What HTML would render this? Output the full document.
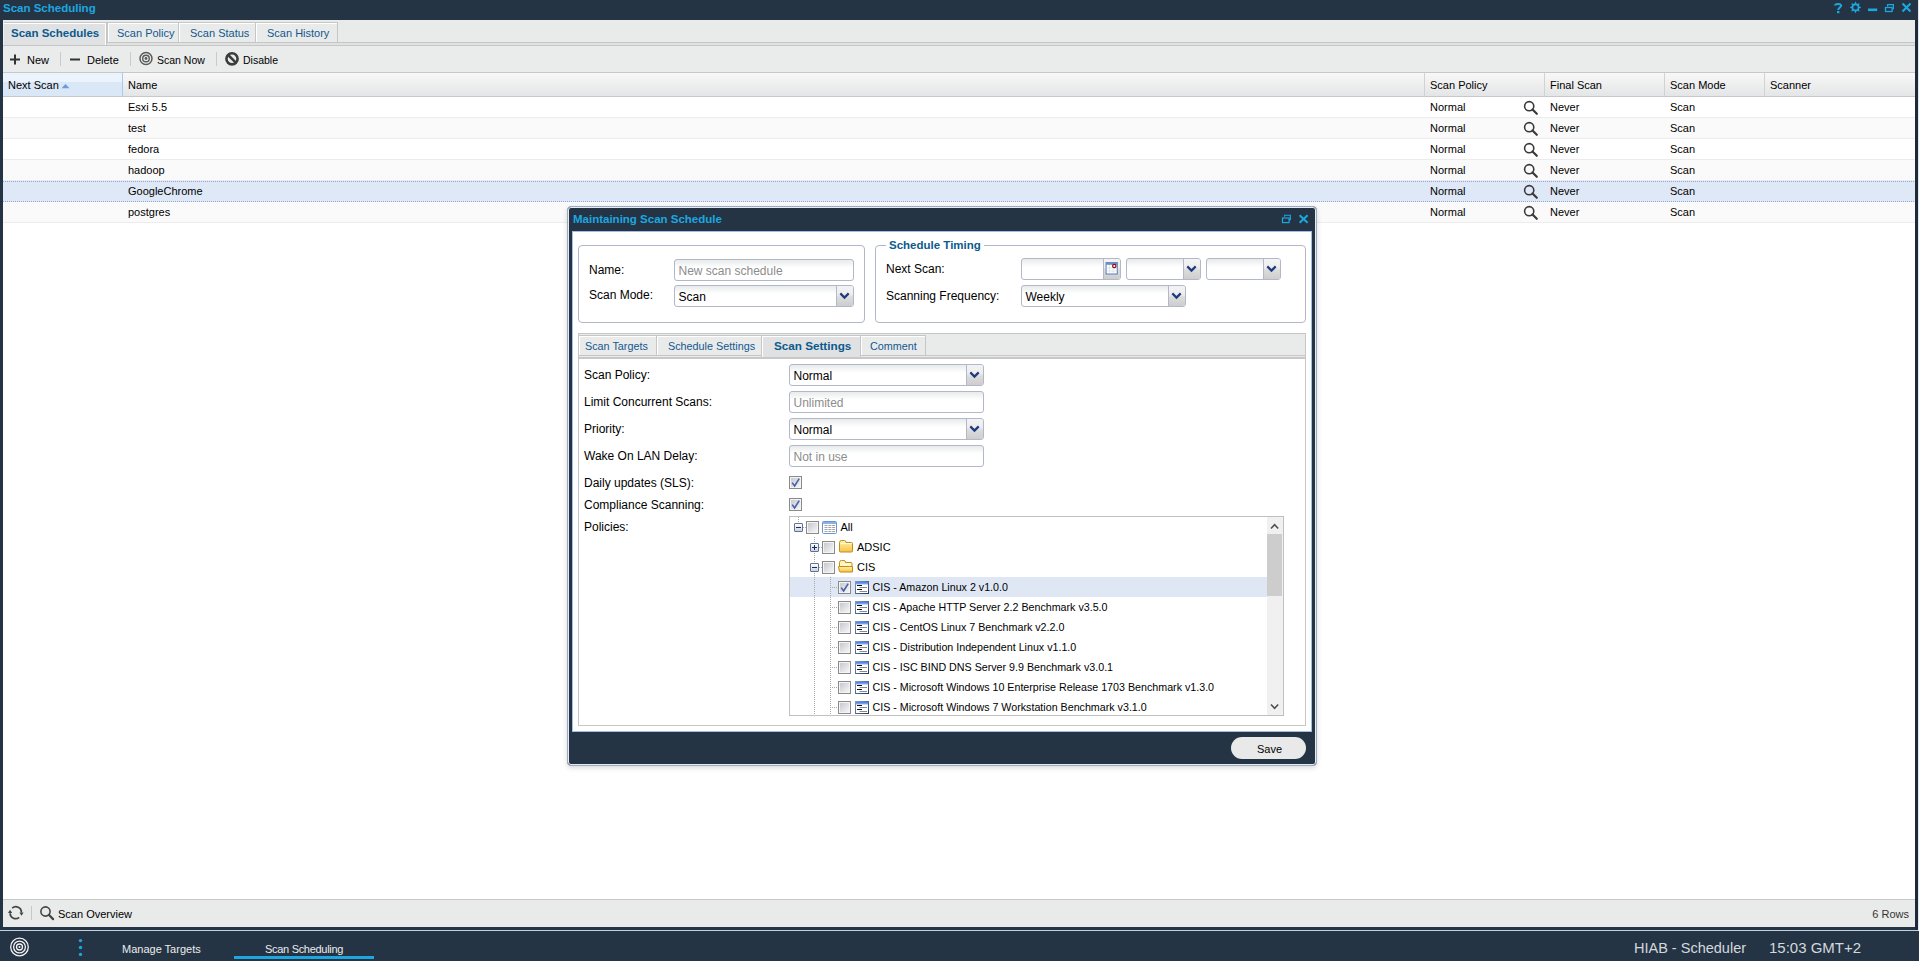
<!DOCTYPE html>
<html><head><meta charset="utf-8">
<style>
*{box-sizing:border-box}
html,body{margin:0;padding:0}
body{width:1919px;height:961px;overflow:hidden;background:#243444;position:relative;font-family:"Liberation Sans",sans-serif;font-size:11px;color:#000}
.a{position:absolute}
.t{position:absolute;white-space:pre;line-height:1}
svg{position:absolute;overflow:visible}
.tab{position:absolute;top:22px;height:21px;border:1px solid #c6c6c6;background:#e9ebea;box-shadow:inset 1px 1px 0 #fff}
.tt{color:#15609a}
</style></head><body>
<div class="t" style="left:3px;top:3px;font-size:11.5px;font-weight:bold;color:#1ca7e0">Scan Scheduling</div>
<svg style="left:0;top:0" width="1919" height="20">
<g fill="none" stroke="#1ca7e0">
<path d="M1835 5.6 C1835 3.6 1841.2 3.2 1841.2 5.6 C1841.2 7.2 1838.2 8 1838.2 10" stroke-width="2"/>
<rect x="1837" y="11" width="2.4" height="2.2" fill="#1ca7e0" stroke="none"/>
<path d="M1855.50 1.60 L1854.08 3.98 L1851.40 3.30 L1852.08 5.98 L1849.70 7.40 L1852.08 8.82 L1851.40 11.50 L1854.08 10.82 L1855.50 13.20 L1856.92 10.82 L1859.60 11.50 L1858.92 8.82 L1861.30 7.40 L1858.92 5.98 L1859.60 3.30 L1856.92 3.98 Z M1857.7 7.4 A2.2 2.2 0 1 0 1853.3 7.4 A2.2 2.2 0 1 0 1857.7 7.4 Z" fill="#1ca7e0" fill-rule="evenodd" stroke="none"/>
<rect x="1868" y="8.5" width="9.2" height="2.6" fill="#1ca7e0" stroke="none"/>
<path d="M1887.6 6.6 V4.6 H1893.4 V8.6 H1892.4" stroke-width="1.2"/>
<rect x="1885.5" y="7.5" width="6.6" height="4" stroke-width="1.3"/>
<path d="M1902.5 3.6 L1910.5 11.4 M1910.5 3.6 L1902.5 11.4" stroke-width="2.1"/>
</g></svg>
<div class="a" style="left:3px;top:20px;width:1912px;height:907px;background:#fff"></div>
<div class="a" style="left:3px;top:20px;width:1912px;height:26px;background:#e9ebea"></div>
<div class="a" style="left:3px;top:42px;width:1912px;height:1px;background:#c6c6c6"></div>
<div class="a" style="left:3px;top:43px;width:1912px;height:2px;background:#e0e1e3"></div>
<div class="a" style="left:3px;top:45px;width:1912px;height:1px;background:#c6c6c6"></div>
<div class="a" style="left:3px;top:22px;width:104px;height:23px;background:#e0e1e3;border-top:1px solid #c6c6c6;border-right:1px solid #c6c6c6;box-shadow:inset -1px 1px 0 #fff"></div>
<div class="a" style="left:3px;top:22px;width:1px;height:23px;background:#eef0f0"></div>
<div class="t" style="left:11px;top:28px;font-weight:bold;font-size:11.5px;color:#0b5a8c">Scan Schedules</div>
<div class="tab" style="left:107px;width:72px"></div>
<div class="t" style="left:117px;top:28px;color:#12588f">Scan Policy</div>
<div class="tab" style="left:178px;width:78px"></div>
<div class="t" style="left:190px;top:28px;color:#12588f">Scan Status</div>
<div class="tab" style="left:255px;width:83px"></div>
<div class="t" style="left:267px;top:28px;color:#12588f">Scan History</div>
<div class="a" style="left:3px;top:46px;width:1912px;height:26px;background:#eaeceb"></div>
<div class="a" style="left:3px;top:72px;width:1912px;height:1px;background:#c8c8c8"></div>
<div class="a" style="left:60px;top:52px;width:1px;height:14px;background:#c9cbcb"></div>
<div class="a" style="left:130px;top:52px;width:1px;height:14px;background:#c9cbcb"></div>
<div class="a" style="left:216px;top:52px;width:1px;height:14px;background:#c9cbcb"></div>
<svg style="left:0;top:0" width="300" height="80">
<path d="M15 54.5 V64.5 M10 59.5 H20" stroke="#333" stroke-width="2"/>
<path d="M70 59.5 H80" stroke="#333" stroke-width="2"/>
<g fill="none" stroke="#5a5a5a"><circle cx="146" cy="58.5" r="6" stroke-width="1.5"/><circle cx="146" cy="58.5" r="3.3" stroke-width="1.4"/></g>
<circle cx="146" cy="58.5" r="1.4" fill="#5a5a5a"/>
<g fill="none" stroke="#3c3c3c"><circle cx="232" cy="58.8" r="5.6" stroke-width="2.6"/><path d="M228.2 55 L235.8 62.6" stroke-width="2.5"/></g>
</svg>
<div class="t" style="left:27px;top:55px;font-size:11px">New</div>
<div class="t" style="left:87px;top:55px;font-size:11px">Delete</div>
<div class="t" style="left:157px;top:55px;font-size:10.5px">Scan Now</div>
<div class="t" style="left:243px;top:55px;font-size:10.5px">Disable</div>
<div class="a" style="left:3px;top:73px;width:1912px;height:23px;background:linear-gradient(#f8f8f8,#e4e5e6)"></div>
<div class="a" style="left:3px;top:96px;width:1912px;height:1px;background:#c8c8c8"></div>
<div class="a" style="left:3px;top:73px;width:119px;height:9px;background:#ebf3fc"></div>
<div class="a" style="left:3px;top:82px;width:119px;height:14px;background:#dae7f7"></div>
<div class="a" style="left:122px;top:73px;width:1px;height:23px;background:#a9c9ef"></div>
<div class="a" style="left:1424px;top:73px;width:1px;height:23px;background:#d2d2d2"></div>
<div class="a" style="left:1544px;top:73px;width:1px;height:23px;background:#d2d2d2"></div>
<div class="a" style="left:1664px;top:73px;width:1px;height:23px;background:#d2d2d2"></div>
<div class="a" style="left:1764px;top:73px;width:1px;height:23px;background:#d2d2d2"></div>
<div class="t" style="left:8px;top:79.69px;font-size:11px;">Next Scan</div>
<svg style="left:0;top:0" width="80" height="100"><path d="M61.5 88.2 L65.5 84 L69.5 88.2 Z" fill="#6e9bd6"/></svg>
<div class="t" style="left:128px;top:79.69px;font-size:11px;">Name</div>
<div class="t" style="left:1430px;top:79.69px;font-size:11px;">Scan Policy</div>
<div class="t" style="left:1550px;top:79.69px;font-size:11px;">Final Scan</div>
<div class="t" style="left:1670px;top:79.69px;font-size:11px;">Scan Mode</div>
<div class="t" style="left:1770px;top:79.69px;font-size:11px;">Scanner</div>
<div class="a" style="left:3px;top:97px;width:1912px;height:20px;background:#ffffff"></div>
<div class="a" style="left:3px;top:117px;width:1912px;height:1px;background:#ececec"></div>
<div class="t" style="left:128px;top:101.69px;font-size:11px;">Esxi 5.5</div>
<div class="t" style="left:1430px;top:101.69px;font-size:11px;">Normal</div>
<div class="t" style="left:1550px;top:101.69px;font-size:11px;">Never</div>
<div class="t" style="left:1670px;top:101.69px;font-size:11px;">Scan</div>
<div class="a" style="left:3px;top:118px;width:1912px;height:20px;background:#fafafa"></div>
<div class="a" style="left:3px;top:138px;width:1912px;height:1px;background:#ececec"></div>
<div class="t" style="left:128px;top:122.69px;font-size:11px;">test</div>
<div class="t" style="left:1430px;top:122.69px;font-size:11px;">Normal</div>
<div class="t" style="left:1550px;top:122.69px;font-size:11px;">Never</div>
<div class="t" style="left:1670px;top:122.69px;font-size:11px;">Scan</div>
<div class="a" style="left:3px;top:139px;width:1912px;height:20px;background:#ffffff"></div>
<div class="a" style="left:3px;top:159px;width:1912px;height:1px;background:#ececec"></div>
<div class="t" style="left:128px;top:143.69px;font-size:11px;">fedora</div>
<div class="t" style="left:1430px;top:143.69px;font-size:11px;">Normal</div>
<div class="t" style="left:1550px;top:143.69px;font-size:11px;">Never</div>
<div class="t" style="left:1670px;top:143.69px;font-size:11px;">Scan</div>
<div class="a" style="left:3px;top:160px;width:1912px;height:20px;background:#fafafa"></div>
<div class="a" style="left:3px;top:180px;width:1912px;height:1px;background:#ececec"></div>
<div class="t" style="left:128px;top:164.69px;font-size:11px;">hadoop</div>
<div class="t" style="left:1430px;top:164.69px;font-size:11px;">Normal</div>
<div class="t" style="left:1550px;top:164.69px;font-size:11px;">Never</div>
<div class="t" style="left:1670px;top:164.69px;font-size:11px;">Scan</div>
<div class="a" style="left:3px;top:181px;width:1912px;height:20px;background:#dfe8f6"></div>
<div class="a" style="left:3px;top:201px;width:1912px;height:1px;background:#ececec"></div>
<div class="t" style="left:128px;top:185.69px;font-size:11px;">GoogleChrome</div>
<div class="t" style="left:1430px;top:185.69px;font-size:11px;">Normal</div>
<div class="t" style="left:1550px;top:185.69px;font-size:11px;">Never</div>
<div class="t" style="left:1670px;top:185.69px;font-size:11px;">Scan</div>
<div class="a" style="left:3px;top:202px;width:1912px;height:20px;background:#fafafa"></div>
<div class="a" style="left:3px;top:222px;width:1912px;height:1px;background:#ececec"></div>
<div class="t" style="left:128px;top:206.69px;font-size:11px;">postgres</div>
<div class="t" style="left:1430px;top:206.69px;font-size:11px;">Normal</div>
<div class="t" style="left:1550px;top:206.69px;font-size:11px;">Never</div>
<div class="t" style="left:1670px;top:206.69px;font-size:11px;">Scan</div>
<svg style="left:0;top:0" width="1919" height="240"><circle cx="1529.2" cy="106.2" r="4.6" fill="none" stroke="#3a3a3a" stroke-width="1.6"/><path d="M1532.5 109.5 L1536.8 113.8" stroke="#3a3a3a" stroke-width="2.2" stroke-linecap="round"/><circle cx="1529.2" cy="127.2" r="4.6" fill="none" stroke="#3a3a3a" stroke-width="1.6"/><path d="M1532.5 130.5 L1536.8 134.8" stroke="#3a3a3a" stroke-width="2.2" stroke-linecap="round"/><circle cx="1529.2" cy="148.2" r="4.6" fill="none" stroke="#3a3a3a" stroke-width="1.6"/><path d="M1532.5 151.5 L1536.8 155.79999999999998" stroke="#3a3a3a" stroke-width="2.2" stroke-linecap="round"/><circle cx="1529.2" cy="169.2" r="4.6" fill="none" stroke="#3a3a3a" stroke-width="1.6"/><path d="M1532.5 172.5 L1536.8 176.79999999999998" stroke="#3a3a3a" stroke-width="2.2" stroke-linecap="round"/><circle cx="1529.2" cy="190.2" r="4.6" fill="none" stroke="#3a3a3a" stroke-width="1.6"/><path d="M1532.5 193.5 L1536.8 197.79999999999998" stroke="#3a3a3a" stroke-width="2.2" stroke-linecap="round"/><circle cx="1529.2" cy="211.2" r="4.6" fill="none" stroke="#3a3a3a" stroke-width="1.6"/><path d="M1532.5 214.5 L1536.8 218.79999999999998" stroke="#3a3a3a" stroke-width="2.2" stroke-linecap="round"/></svg>
<div class="a" style="left:3px;top:181px;width:1912px;height:1px;background:repeating-linear-gradient(90deg,#8aa6dc 0 1px,transparent 1px 2px)"></div>
<div class="a" style="left:3px;top:201px;width:1912px;height:1px;background:repeating-linear-gradient(90deg,#8aa6dc 0 1px,transparent 1px 2px)"></div>
<div class="a" style="left:3px;top:899px;width:1912px;height:1px;background:#c8c8c8"></div>
<div class="a" style="left:3px;top:900px;width:1912px;height:27px;background:#e9ebea"></div>
<div class="a" style="left:31px;top:906px;width:1px;height:14px;background:#c6c8c8"></div>
<svg style="left:0;top:0" width="80" height="930">
<g fill="none" stroke="#444" stroke-width="1.7">
<path d="M12.2 908.2 A5.5 5.5 0 0 1 21.4 912.4"/>
<path d="M19.2 917.3 A5.5 5.5 0 0 1 10.1 913.2"/>
</g>
<path d="M19.4 912.6 L23.6 912.6 L21.5 915.8 Z" fill="#444"/>
<path d="M8 913 L12.2 913 L10.1 909.8 Z" fill="#444"/>
<circle cx="45.5" cy="911.5" r="4.6" fill="none" stroke="#444" stroke-width="1.6"/><path d="M48.8 914.8 L53.1 919.1" stroke="#444" stroke-width="2.2" stroke-linecap="round"/>
</svg>
<div class="t" style="left:58px;top:908.69px;font-size:11px;">Scan Overview</div>
<div class="t" style="right:10px;top:908.7px;font-size:11px;color:#333">6 Rows</div>
<div class="a" style="left:0px;top:927px;width:1919px;height:34px;background:#243444"></div>
<div class="a" style="left:0px;top:930px;width:1919px;height:1px;background:#c4d0e0"></div>
<div class="a" style="left:1918px;top:0px;width:1px;height:931px;background:#dfe7f3"></div>
<div class="a" style="left:1915px;top:20px;width:3px;height:910px;background:#1c2a39"></div>
<svg style="left:0;top:0" width="100" height="961">
<g fill="none" stroke="#f2f2f2" stroke-width="1.3"><circle cx="19.5" cy="947" r="8.8"/><circle cx="19.5" cy="947" r="5.9"/><circle cx="19.5" cy="947" r="3"/></g>
<circle cx="19.5" cy="947" r="1" fill="#f2f2f2"/>
<g fill="#1ca7e0"><circle cx="80.5" cy="940.6" r="1.7"/><circle cx="80.5" cy="947.5" r="1.7"/><circle cx="80.5" cy="954.4" r="1.7"/></g>
</svg>
<div class="t" style="left:122px;top:943.69px;font-size:11px;color:#ececec">Manage Targets</div>
<div class="t" style="left:265px;top:943.69px;font-size:11px;color:#ececec;letter-spacing:-0.3px">Scan Scheduling</div>
<div class="a" style="left:234px;top:956px;width:140px;height:3px;background:#1ca7e0"></div>
<div class="t" style="left:1634px;top:940.73px;font-size:14.5px;color:#d4d8dc">HIAB - Scheduler</div>
<div class="t" style="left:1769px;top:940.30px;font-size:15px;color:#d4d8dc">15:03 GMT+2</div>
<div class="a" style="left:567px;top:206px;width:750px;height:560px;border:1px solid #9eabbf;border-radius:4px;background:#243444;box-shadow:0 2px 5px rgba(0,0,0,0.15),inset 0 0 0 1px #e4ecf8"></div>
<div class="t" style="left:573px;top:213.97px;font-size:11.5px;font-weight:bold;color:#1ca7e0">Maintaining Scan Schedule</div>
<svg style="left:0;top:0" width="1" height="1"><g fill="none" stroke="#1ca7e0">
<path d="M1284.6 216.8 V215.3 H1290.4 V219.6 H1289" stroke-width="1.1"/>
<rect x="1282.5" y="218" width="6.6" height="4.6" stroke-width="1.2"/>
<path d="M1299.6 215.2 L1307.6 222.8 M1307.6 215.2 L1299.6 222.8" stroke-width="2"/></g></svg>
<div class="a" style="left:572px;top:231px;width:740px;height:501px;background:#fff;border:1px solid #9dbfe9"></div>
<div class="a" style="left:578px;top:245px;width:287px;height:78px;border:1px solid #b2b6ca;border-radius:4px"></div>
<div class="t" style="left:589px;top:263.84px;font-size:12px;">Name:</div>
<div class="a" style="left:674px;top:259px;width:180px;height:22px;border:1px solid #b3b7cb;border-radius:3px;background:linear-gradient(#e8ebeb,#fff 8px);overflow:hidden"></div>
<div class="t" style="left:678.5px;top:264.59px;font-size:12px;color:#8c8c8c">New scan schedule</div>
<div class="t" style="left:589px;top:288.84px;font-size:12px;">Scan Mode:</div>
<div class="a" style="left:674px;top:285px;width:180px;height:22px;border:1px solid #b3b7cb;border-radius:3px;background:linear-gradient(#e8ebeb,#fff 8px);overflow:hidden"><div class="a" style="right:0;top:0;width:17px;height:20px;border-left:1px solid #b3b7cb;background:linear-gradient(#f3f3f3,#ededed 42%,#dcdcdc 55%,#cdcdcd)"></div></div>
<svg style="left:0;top:0" width="1" height="1"><path d="M840.3 293.4 L844.5 297.6 L848.7 293.4" fill="none" stroke="#1f3a7e" stroke-width="2.2"/></svg>
<div class="t" style="left:678.5px;top:290.59px;font-size:12px;color:#000">Scan</div>
<div class="a" style="left:875px;top:245px;width:431px;height:78px;border:1px solid #b2b6ca;border-radius:4px"></div>
<div class="a" style="left:886px;top:243px;width:98px;height:4px;background:#fff"></div>
<div class="t" style="left:889px;top:239.87px;font-size:11.5px;font-weight:bold;color:#0e5a8c">Schedule Timing</div>
<div class="t" style="left:886px;top:263.04px;font-size:12px;">Next Scan:</div>
<div class="a" style="left:1021px;top:258px;width:100px;height:22px;border:1px solid #b3b7cb;border-radius:3px;background:linear-gradient(#e8ebeb,#fff 8px);overflow:hidden"><div class="a" style="right:0;top:0;width:17px;height:20px;border-left:1px solid #b3b7cb;background:linear-gradient(#f3f3f3,#ededed 42%,#dcdcdc 55%,#cdcdcd)"></div></div>
<svg style="left:0;top:0" width="1" height="1"><rect x="1106.1" y="262.6" width="11.2" height="11.4" fill="#fff" stroke="#6b8cc4" stroke-width="1.2"/><rect x="1106.1" y="262.6" width="11.2" height="2.2" fill="#6b8cc4"/>
<path d="M1109.5 265.0 V273.5 M1113.1 265.0 V273.5 M1106.5 268.0 H1117.0 M1106.5 271.0 H1117.0" stroke="#d8dde6" stroke-width="0.8"/>
<circle cx="1114.3" cy="266.0" r="1.7" fill="#fff" stroke="#8b0f0f" stroke-width="1.2"/></svg>
<div class="a" style="left:1126px;top:258px;width:75px;height:22px;border:1px solid #b3b7cb;border-radius:3px;background:linear-gradient(#e8ebeb,#fff 8px);overflow:hidden"><div class="a" style="right:0;top:0;width:17px;height:20px;border-left:1px solid #b3b7cb;background:linear-gradient(#f3f3f3,#ededed 42%,#dcdcdc 55%,#cdcdcd)"></div></div>
<svg style="left:0;top:0" width="1" height="1"><path d="M1187.3 266.4 L1191.5 270.6 L1195.7 266.4" fill="none" stroke="#1f3a7e" stroke-width="2.2"/></svg>
<div class="a" style="left:1206px;top:258px;width:75px;height:22px;border:1px solid #b3b7cb;border-radius:3px;background:linear-gradient(#e8ebeb,#fff 8px);overflow:hidden"><div class="a" style="right:0;top:0;width:17px;height:20px;border-left:1px solid #b3b7cb;background:linear-gradient(#f3f3f3,#ededed 42%,#dcdcdc 55%,#cdcdcd)"></div></div>
<svg style="left:0;top:0" width="1" height="1"><path d="M1267.3 266.4 L1271.5 270.6 L1275.7 266.4" fill="none" stroke="#1f3a7e" stroke-width="2.2"/></svg>
<div class="t" style="left:886px;top:289.84px;font-size:12px;">Scanning Frequency:</div>
<div class="a" style="left:1021px;top:285px;width:165px;height:22px;border:1px solid #b3b7cb;border-radius:3px;background:linear-gradient(#e8ebeb,#fff 8px);overflow:hidden"><div class="a" style="right:0;top:0;width:17px;height:20px;border-left:1px solid #b3b7cb;background:linear-gradient(#f3f3f3,#ededed 42%,#dcdcdc 55%,#cdcdcd)"></div></div>
<svg style="left:0;top:0" width="1" height="1"><path d="M1172.3 293.4 L1176.5 297.6 L1180.7 293.4" fill="none" stroke="#1f3a7e" stroke-width="2.2"/></svg>
<div class="t" style="left:1025.5px;top:290.59px;font-size:12px;color:#000">Weekly</div>
<div class="a" style="left:578px;top:333px;width:728px;height:393px;border:1px solid #c6c6c6;background:#fff"></div>
<div class="a" style="left:579px;top:334px;width:726px;height:24px;background:#e9ebea"></div>
<div class="a" style="left:579px;top:355px;width:726px;height:1px;background:#c8c8c8"></div>
<div class="a" style="left:579px;top:357px;width:726px;height:2px;background:#c8c8c8"></div>
<div class="a" style="left:578px;top:335px;width:79px;height:21px;border:1px solid #c6c6c6;background:#e9ebea;box-shadow:inset 1px 1px 0 #fff"></div>
<div class="t" style="left:585px;top:340.86px;font-size:10.8px;color:#12588f">Scan Targets</div>
<div class="a" style="left:656px;top:335px;width:106px;height:21px;border:1px solid #c6c6c6;background:#e9ebea;box-shadow:inset 1px 1px 0 #fff"></div>
<div class="t" style="left:668px;top:340.86px;font-size:10.8px;color:#12588f">Schedule Settings</div>
<div class="a" style="left:860px;top:335px;width:66px;height:21px;border:1px solid #c6c6c6;background:#e9ebea;box-shadow:inset 1px 1px 0 #fff"></div>
<div class="t" style="left:870px;top:340.86px;font-size:10.8px;color:#12588f">Comment</div>
<div class="a" style="left:761px;top:335px;width:100px;height:22px;border:1px solid #c6c6c6;border-bottom:none;background:#e0e1e3;box-shadow:inset 1px 1px 0 #fff"></div>
<div class="t" style="left:774px;top:340.10px;font-size:11.7px;font-weight:bold;color:#0b5a8c">Scan Settings</div>
<div class="t" style="left:584px;top:368.84px;font-size:12px;">Scan Policy:</div>
<div class="a" style="left:789px;top:364px;width:195px;height:22px;border:1px solid #b3b7cb;border-radius:3px;background:linear-gradient(#e8ebeb,#fff 8px);overflow:hidden"><div class="a" style="right:0;top:0;width:17px;height:20px;border-left:1px solid #b3b7cb;background:linear-gradient(#f3f3f3,#ededed 42%,#dcdcdc 55%,#cdcdcd)"></div></div>
<svg style="left:0;top:0" width="1" height="1"><path d="M970.3 372.4 L974.5 376.6 L978.7 372.4" fill="none" stroke="#1f3a7e" stroke-width="2.2"/></svg>
<div class="t" style="left:793.5px;top:369.59px;font-size:12px;color:#000">Normal</div>
<div class="t" style="left:584px;top:395.84px;font-size:12px;">Limit Concurrent Scans:</div>
<div class="a" style="left:789px;top:391px;width:195px;height:22px;border:1px solid #b3b7cb;border-radius:3px;background:linear-gradient(#e8ebeb,#fff 8px);overflow:hidden"></div>
<div class="t" style="left:793.5px;top:396.59px;font-size:12px;color:#8c8c8c">Unlimited</div>
<div class="t" style="left:584px;top:422.84px;font-size:12px;">Priority:</div>
<div class="a" style="left:789px;top:418px;width:195px;height:22px;border:1px solid #b3b7cb;border-radius:3px;background:linear-gradient(#e8ebeb,#fff 8px);overflow:hidden"><div class="a" style="right:0;top:0;width:17px;height:20px;border-left:1px solid #b3b7cb;background:linear-gradient(#f3f3f3,#ededed 42%,#dcdcdc 55%,#cdcdcd)"></div></div>
<svg style="left:0;top:0" width="1" height="1"><path d="M970.3 426.4 L974.5 430.6 L978.7 426.4" fill="none" stroke="#1f3a7e" stroke-width="2.2"/></svg>
<div class="t" style="left:793.5px;top:423.59px;font-size:12px;color:#000">Normal</div>
<div class="t" style="left:584px;top:449.84px;font-size:12px;">Wake On LAN Delay:</div>
<div class="a" style="left:789px;top:445px;width:195px;height:22px;border:1px solid #b3b7cb;border-radius:3px;background:linear-gradient(#e8ebeb,#fff 8px);overflow:hidden"></div>
<div class="t" style="left:793.5px;top:450.59px;font-size:12px;color:#8c8c8c">Not in use</div>
<div class="t" style="left:584px;top:476.84px;font-size:12px;">Daily updates (SLS):</div>
<div class="a" style="left:789px;top:476px;width:13px;height:13px;border:1px solid #8a8a8a;background:#fff;box-shadow:inset 0 0 0 1px #f4f4f4"></div><div class="a" style="left:791px;top:478px;width:9px;height:9px;background:linear-gradient(135deg,#c6c9cf,#f5f5f5)"></div>
<svg style="left:0;top:0" width="1" height="1"><path d="M792.2 482.6 L794.6 486 L799.2 478.6" fill="none" stroke="#4862aa" stroke-width="1.6"/></svg>
<div class="t" style="left:584px;top:498.84px;font-size:12px;">Compliance Scanning:</div>
<div class="a" style="left:789px;top:498px;width:13px;height:13px;border:1px solid #8a8a8a;background:#fff;box-shadow:inset 0 0 0 1px #f4f4f4"></div><div class="a" style="left:791px;top:500px;width:9px;height:9px;background:linear-gradient(135deg,#c6c9cf,#f5f5f5)"></div>
<svg style="left:0;top:0" width="1" height="1"><path d="M792.2 504.6 L794.6 508 L799.2 500.6" fill="none" stroke="#4862aa" stroke-width="1.6"/></svg>
<div class="t" style="left:584px;top:520.84px;font-size:12px;">Policies:</div>
<div class="a" style="left:789px;top:516px;width:495px;height:200px;border:1px solid #c0c0c0;background:#fff;overflow:hidden"></div>
<div class="a" style="left:790px;top:577px;width:477px;height:20px;background:#dfe7f5"></div>
<div class="a" style="left:1267px;top:517px;width:16px;height:198px;background:#f0f0f0"></div>
<div class="a" style="left:1267px;top:534px;width:15px;height:62px;background:#cdcdcd"></div>
<svg style="left:0;top:0" width="1" height="1"><path d="M1271 528.5 L1274.6 524.6 L1278.2 528.5" fill="none" stroke="#505050" stroke-width="1.6"/><path d="M1271 704.5 L1274.6 708.4 L1278.2 704.5" fill="none" stroke="#505050" stroke-width="1.6"/></svg>
<div class="a" style="left:798px;top:517px;width:1px;height:6px;background:repeating-linear-gradient(#a8a8a8 0 1px,transparent 1px 2px)"></div>
<div class="a" style="left:803px;top:527px;width:3px;height:1px;background:repeating-linear-gradient(90deg,#a8a8a8 0 1px,transparent 1px 2px)"></div>
<div class="a" style="left:814px;top:537px;width:1px;height:178px;background:repeating-linear-gradient(#a8a8a8 0 1px,transparent 1px 2px)"></div>
<div class="a" style="left:819px;top:547px;width:3px;height:1px;background:repeating-linear-gradient(90deg,#a8a8a8 0 1px,transparent 1px 2px)"></div>
<div class="a" style="left:819px;top:567px;width:3px;height:1px;background:repeating-linear-gradient(90deg,#a8a8a8 0 1px,transparent 1px 2px)"></div>
<div class="a" style="left:830px;top:577px;width:1px;height:138px;background:repeating-linear-gradient(#a8a8a8 0 1px,transparent 1px 2px)"></div>
<div class="a" style="left:794px;top:523px;width:9px;height:9px;border:1px solid #5c7396;border-radius:1px;background:linear-gradient(#fff,#c9d4e4)"></div><div class="a" style="left:796px;top:527px;width:5px;height:1px;background:#1d2f4d"></div>
<div class="a" style="left:806px;top:521px;width:13px;height:13px;border:1px solid #8a8a8a;background:#fff;box-shadow:inset 0 0 0 1px #f4f4f4"></div><div class="a" style="left:808px;top:523px;width:9px;height:9px;background:linear-gradient(135deg,#c6c9cf,#f5f5f5)"></div>
<svg style="left:0;top:0" width="1" height="1"><rect x="822.5" y="521.5" width="14" height="12" rx="1" fill="#fff" stroke="#6a92d4"/><rect x="823" y="522" width="13" height="2" fill="#8cb0e8"/><rect x="824.5" y="525" width="3" height="1" fill="#a4a4a4"/><rect x="828.3" y="525" width="3" height="1" fill="#a4a4a4"/><rect x="832.1" y="525" width="3" height="1" fill="#a4a4a4"/><rect x="824.5" y="527" width="3" height="1" fill="#a4a4a4"/><rect x="828.3" y="527" width="3" height="1" fill="#a4a4a4"/><rect x="832.1" y="527" width="3" height="1" fill="#a4a4a4"/><rect x="824.5" y="529" width="3" height="1" fill="#a4a4a4"/><rect x="828.3" y="529" width="3" height="1" fill="#a4a4a4"/><rect x="832.1" y="529" width="3" height="1" fill="#a4a4a4"/><rect x="824.5" y="531" width="3" height="1" fill="#a4a4a4"/><rect x="828.3" y="531" width="3" height="1" fill="#a4a4a4"/><rect x="832.1" y="531" width="3" height="1" fill="#a4a4a4"/></svg>
<div class="t" style="left:840.5px;top:521.69px;font-size:11px;">All</div>
<div class="a" style="left:810px;top:543px;width:9px;height:9px;border:1px solid #5c7396;border-radius:1px;background:linear-gradient(#fff,#c9d4e4)"></div><div class="a" style="left:812px;top:547px;width:5px;height:1px;background:#1d2f4d"></div>
<div class="a" style="left:814px;top:545px;width:1px;height:5px;background:#1d2f4d"></div>
<div class="a" style="left:822px;top:541px;width:13px;height:13px;border:1px solid #8a8a8a;background:#fff;box-shadow:inset 0 0 0 1px #f4f4f4"></div><div class="a" style="left:824px;top:543px;width:9px;height:9px;background:linear-gradient(135deg,#c6c9cf,#f5f5f5)"></div>
<svg style="left:0;top:0" width="1" height="1"><defs><linearGradient id="fg" x1="0" y1="0" x2="0" y2="1"><stop offset="0" stop-color="#fff6a8"/><stop offset="1" stop-color="#f6c14a"/></linearGradient></defs><path d="M839.5 551 V542.5 Q839.5 540.5 841.5 540.5 H844.5 Q846 540.5 846 542.5 H851.5 Q852.5 542.5 852.5 543.5 V551 Q852.5 552 851.5 552 H840.5 Q839.5 552 839.5 551 Z" fill="url(#fg)" stroke="#c48a1c"/><path d="M840.5 543.5 H851.5" stroke="#fffbe0" stroke-width="1"/></svg>
<div class="t" style="left:857px;top:541.69px;font-size:11px;">ADSIC</div>
<div class="a" style="left:810px;top:563px;width:9px;height:9px;border:1px solid #5c7396;border-radius:1px;background:linear-gradient(#fff,#c9d4e4)"></div><div class="a" style="left:812px;top:567px;width:5px;height:1px;background:#1d2f4d"></div>
<div class="a" style="left:822px;top:561px;width:13px;height:13px;border:1px solid #8a8a8a;background:#fff;box-shadow:inset 0 0 0 1px #f4f4f4"></div><div class="a" style="left:824px;top:563px;width:9px;height:9px;background:linear-gradient(135deg,#c6c9cf,#f5f5f5)"></div>
<svg style="left:0;top:0" width="1" height="1"><defs><linearGradient id="fg" x1="0" y1="0" x2="0" y2="1"><stop offset="0" stop-color="#fff6a8"/><stop offset="1" stop-color="#f6c14a"/></linearGradient></defs><path d="M839.5 571 V562.5 Q839.5 560.5 841.5 560.5 H844 Q845.5 560.5 845.5 562.5 H851 Q852 562.5 852 563.5 V571 Z" fill="#fff8c0" stroke="#c48a1c"/><path d="M838.5 566.5 H849.5 L852.5 566.5 V572 H840.5 Q839.5 572 839.2 570.5 Z" fill="url(#fg)" stroke="#c48a1c"/></svg>
<div class="t" style="left:857px;top:561.69px;font-size:11px;">CIS</div>
<div class="a" style="left:832px;top:587px;width:5px;height:1px;background:repeating-linear-gradient(90deg,#a8a8a8 0 1px,transparent 1px 2px)"></div>
<div class="a" style="left:838px;top:581px;width:13px;height:13px;border:1px solid #8a8a8a;background:#fff;box-shadow:inset 0 0 0 1px #f4f4f4"></div><div class="a" style="left:840px;top:583px;width:9px;height:9px;background:linear-gradient(135deg,#c6c9cf,#f5f5f5)"></div>
<svg style="left:0;top:0" width="1" height="1"><path d="M841.2 587.6 L843.6 591 L848.2 583.6" fill="none" stroke="#4862aa" stroke-width="1.6"/></svg>
<svg style="left:0;top:0" width="1" height="1"><defs><linearGradient id="dg" x1="0" y1="0" x2="0" y2="1"><stop offset="0" stop-color="#4a7de8"/><stop offset="1" stop-color="#8fb3f2"/></linearGradient><linearGradient id="db" x1="0" y1="0" x2="1" y2="1"><stop offset="0" stop-color="#7f9cc8"/><stop offset="1" stop-color="#22385e"/></linearGradient></defs>
<rect x="855.5" y="581.5" width="13" height="12" fill="#fff" stroke="url(#db)"/><rect x="856" y="582" width="12" height="2.5" fill="url(#dg)"/>
<path d="M857 585.5 H862 M857 589.5 H862" stroke="#111" stroke-width="1"/><path d="M859.5 587.5 H867 M859.5 591.5 H867" stroke="#8a8a8a" stroke-width="1"/></svg>
<div class="t" style="left:872.5px;top:581.94px;font-size:10.7px;">CIS - Amazon Linux 2 v1.0.0</div>
<div class="a" style="left:832px;top:607px;width:5px;height:1px;background:repeating-linear-gradient(90deg,#a8a8a8 0 1px,transparent 1px 2px)"></div>
<div class="a" style="left:838px;top:601px;width:13px;height:13px;border:1px solid #8a8a8a;background:#fff;box-shadow:inset 0 0 0 1px #f4f4f4"></div><div class="a" style="left:840px;top:603px;width:9px;height:9px;background:linear-gradient(135deg,#c6c9cf,#f5f5f5)"></div>
<svg style="left:0;top:0" width="1" height="1"><defs><linearGradient id="dg" x1="0" y1="0" x2="0" y2="1"><stop offset="0" stop-color="#4a7de8"/><stop offset="1" stop-color="#8fb3f2"/></linearGradient><linearGradient id="db" x1="0" y1="0" x2="1" y2="1"><stop offset="0" stop-color="#7f9cc8"/><stop offset="1" stop-color="#22385e"/></linearGradient></defs>
<rect x="855.5" y="601.5" width="13" height="12" fill="#fff" stroke="url(#db)"/><rect x="856" y="602" width="12" height="2.5" fill="url(#dg)"/>
<path d="M857 605.5 H862 M857 609.5 H862" stroke="#111" stroke-width="1"/><path d="M859.5 607.5 H867 M859.5 611.5 H867" stroke="#8a8a8a" stroke-width="1"/></svg>
<div class="t" style="left:872.5px;top:601.94px;font-size:10.7px;">CIS - Apache HTTP Server 2.2 Benchmark v3.5.0</div>
<div class="a" style="left:832px;top:627px;width:5px;height:1px;background:repeating-linear-gradient(90deg,#a8a8a8 0 1px,transparent 1px 2px)"></div>
<div class="a" style="left:838px;top:621px;width:13px;height:13px;border:1px solid #8a8a8a;background:#fff;box-shadow:inset 0 0 0 1px #f4f4f4"></div><div class="a" style="left:840px;top:623px;width:9px;height:9px;background:linear-gradient(135deg,#c6c9cf,#f5f5f5)"></div>
<svg style="left:0;top:0" width="1" height="1"><defs><linearGradient id="dg" x1="0" y1="0" x2="0" y2="1"><stop offset="0" stop-color="#4a7de8"/><stop offset="1" stop-color="#8fb3f2"/></linearGradient><linearGradient id="db" x1="0" y1="0" x2="1" y2="1"><stop offset="0" stop-color="#7f9cc8"/><stop offset="1" stop-color="#22385e"/></linearGradient></defs>
<rect x="855.5" y="621.5" width="13" height="12" fill="#fff" stroke="url(#db)"/><rect x="856" y="622" width="12" height="2.5" fill="url(#dg)"/>
<path d="M857 625.5 H862 M857 629.5 H862" stroke="#111" stroke-width="1"/><path d="M859.5 627.5 H867 M859.5 631.5 H867" stroke="#8a8a8a" stroke-width="1"/></svg>
<div class="t" style="left:872.5px;top:621.94px;font-size:10.7px;">CIS - CentOS Linux 7 Benchmark v2.2.0</div>
<div class="a" style="left:832px;top:647px;width:5px;height:1px;background:repeating-linear-gradient(90deg,#a8a8a8 0 1px,transparent 1px 2px)"></div>
<div class="a" style="left:838px;top:641px;width:13px;height:13px;border:1px solid #8a8a8a;background:#fff;box-shadow:inset 0 0 0 1px #f4f4f4"></div><div class="a" style="left:840px;top:643px;width:9px;height:9px;background:linear-gradient(135deg,#c6c9cf,#f5f5f5)"></div>
<svg style="left:0;top:0" width="1" height="1"><defs><linearGradient id="dg" x1="0" y1="0" x2="0" y2="1"><stop offset="0" stop-color="#4a7de8"/><stop offset="1" stop-color="#8fb3f2"/></linearGradient><linearGradient id="db" x1="0" y1="0" x2="1" y2="1"><stop offset="0" stop-color="#7f9cc8"/><stop offset="1" stop-color="#22385e"/></linearGradient></defs>
<rect x="855.5" y="641.5" width="13" height="12" fill="#fff" stroke="url(#db)"/><rect x="856" y="642" width="12" height="2.5" fill="url(#dg)"/>
<path d="M857 645.5 H862 M857 649.5 H862" stroke="#111" stroke-width="1"/><path d="M859.5 647.5 H867 M859.5 651.5 H867" stroke="#8a8a8a" stroke-width="1"/></svg>
<div class="t" style="left:872.5px;top:641.94px;font-size:10.7px;">CIS - Distribution Independent Linux v1.1.0</div>
<div class="a" style="left:832px;top:667px;width:5px;height:1px;background:repeating-linear-gradient(90deg,#a8a8a8 0 1px,transparent 1px 2px)"></div>
<div class="a" style="left:838px;top:661px;width:13px;height:13px;border:1px solid #8a8a8a;background:#fff;box-shadow:inset 0 0 0 1px #f4f4f4"></div><div class="a" style="left:840px;top:663px;width:9px;height:9px;background:linear-gradient(135deg,#c6c9cf,#f5f5f5)"></div>
<svg style="left:0;top:0" width="1" height="1"><defs><linearGradient id="dg" x1="0" y1="0" x2="0" y2="1"><stop offset="0" stop-color="#4a7de8"/><stop offset="1" stop-color="#8fb3f2"/></linearGradient><linearGradient id="db" x1="0" y1="0" x2="1" y2="1"><stop offset="0" stop-color="#7f9cc8"/><stop offset="1" stop-color="#22385e"/></linearGradient></defs>
<rect x="855.5" y="661.5" width="13" height="12" fill="#fff" stroke="url(#db)"/><rect x="856" y="662" width="12" height="2.5" fill="url(#dg)"/>
<path d="M857 665.5 H862 M857 669.5 H862" stroke="#111" stroke-width="1"/><path d="M859.5 667.5 H867 M859.5 671.5 H867" stroke="#8a8a8a" stroke-width="1"/></svg>
<div class="t" style="left:872.5px;top:661.94px;font-size:10.7px;">CIS - ISC BIND DNS Server 9.9 Benchmark v3.0.1</div>
<div class="a" style="left:832px;top:687px;width:5px;height:1px;background:repeating-linear-gradient(90deg,#a8a8a8 0 1px,transparent 1px 2px)"></div>
<div class="a" style="left:838px;top:681px;width:13px;height:13px;border:1px solid #8a8a8a;background:#fff;box-shadow:inset 0 0 0 1px #f4f4f4"></div><div class="a" style="left:840px;top:683px;width:9px;height:9px;background:linear-gradient(135deg,#c6c9cf,#f5f5f5)"></div>
<svg style="left:0;top:0" width="1" height="1"><defs><linearGradient id="dg" x1="0" y1="0" x2="0" y2="1"><stop offset="0" stop-color="#4a7de8"/><stop offset="1" stop-color="#8fb3f2"/></linearGradient><linearGradient id="db" x1="0" y1="0" x2="1" y2="1"><stop offset="0" stop-color="#7f9cc8"/><stop offset="1" stop-color="#22385e"/></linearGradient></defs>
<rect x="855.5" y="681.5" width="13" height="12" fill="#fff" stroke="url(#db)"/><rect x="856" y="682" width="12" height="2.5" fill="url(#dg)"/>
<path d="M857 685.5 H862 M857 689.5 H862" stroke="#111" stroke-width="1"/><path d="M859.5 687.5 H867 M859.5 691.5 H867" stroke="#8a8a8a" stroke-width="1"/></svg>
<div class="t" style="left:872.5px;top:681.94px;font-size:10.7px;">CIS - Microsoft Windows 10 Enterprise Release 1703 Benchmark v1.3.0</div>
<div class="a" style="left:832px;top:707px;width:5px;height:1px;background:repeating-linear-gradient(90deg,#a8a8a8 0 1px,transparent 1px 2px)"></div>
<div class="a" style="left:838px;top:701px;width:13px;height:13px;border:1px solid #8a8a8a;background:#fff;box-shadow:inset 0 0 0 1px #f4f4f4"></div><div class="a" style="left:840px;top:703px;width:9px;height:9px;background:linear-gradient(135deg,#c6c9cf,#f5f5f5)"></div>
<svg style="left:0;top:0" width="1" height="1"><defs><linearGradient id="dg" x1="0" y1="0" x2="0" y2="1"><stop offset="0" stop-color="#4a7de8"/><stop offset="1" stop-color="#8fb3f2"/></linearGradient><linearGradient id="db" x1="0" y1="0" x2="1" y2="1"><stop offset="0" stop-color="#7f9cc8"/><stop offset="1" stop-color="#22385e"/></linearGradient></defs>
<rect x="855.5" y="701.5" width="13" height="12" fill="#fff" stroke="url(#db)"/><rect x="856" y="702" width="12" height="2.5" fill="url(#dg)"/>
<path d="M857 705.5 H862 M857 709.5 H862" stroke="#111" stroke-width="1"/><path d="M859.5 707.5 H867 M859.5 711.5 H867" stroke="#8a8a8a" stroke-width="1"/></svg>
<div class="t" style="left:872.5px;top:701.94px;font-size:10.7px;">CIS - Microsoft Windows 7 Workstation Benchmark v3.1.0</div>
<div class="a" style="left:790px;top:716px;width:478px;height:0px;"></div>
<div class="a" style="left:1231px;top:737px;width:75px;height:22px;background:#e9e9e9;border-radius:11px"></div>
<div class="t" style="left:1257px;top:743.69px;font-size:11px;">Save</div>
</body></html>
